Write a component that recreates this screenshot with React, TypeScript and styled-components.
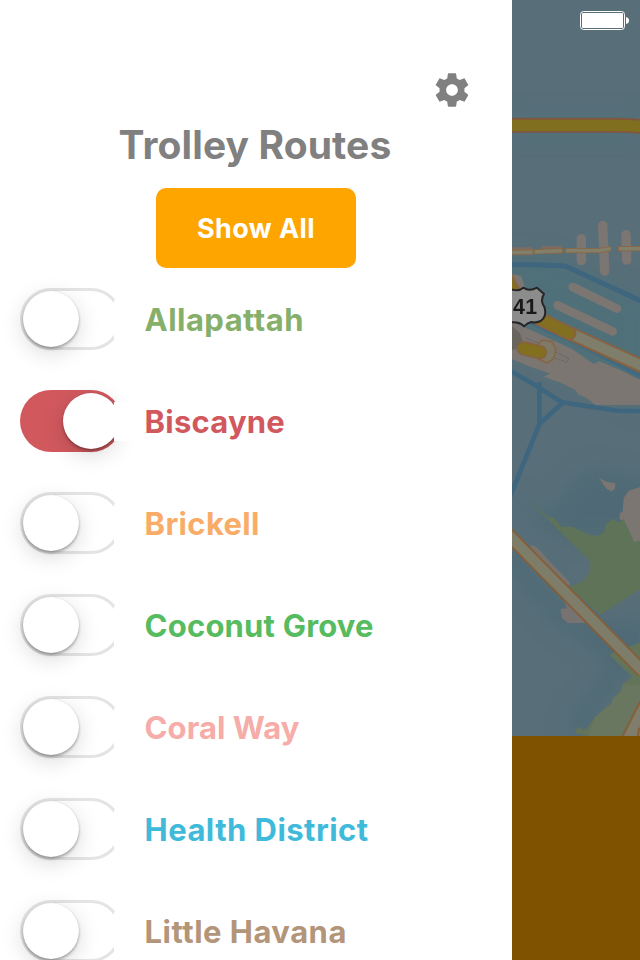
import React from "react";
import styled, { createGlobalStyle } from "styled-components";

const GlobalStyle = createGlobalStyle`
  * { box-sizing: border-box; }
  body { margin: 0; background: #fff; overflow: hidden; }
`;

const Screen = styled.div`
  display: flex;
  width: 640px;
  height: 960px;
  overflow: hidden;
  font-family: Inter, "Liberation Sans", sans-serif;
  font-weight: 700;
  font-feature-settings: "calt" 0, "liga" 0;
`;

const Drawer = styled.aside`
  display: flex;
  flex-direction: column;
  width: 512px;
  height: 960px;
  overflow: hidden;
  background: #fff;
`;

const Toolbar = styled.div`
  display: flex;
  justify-content: flex-end;
  padding: 70px 40px 0 0;
`;

const IconButton = styled.button`
  display: flex;
  padding: 0;
  border: 0;
  background: none;
`;

const Title = styled.h1`
  margin: 11px 2px 0 0;
  height: 48px;
  line-height: 48px;
  font-size: 39px;
  font-weight: 700;
  letter-spacing: 0.1px;
  text-align: center;
  color: #808080;
`;

const ShowAll = styled.button`
  align-self: center;
  flex: none;
  width: 200px;
  height: 80px;
  margin-top: 19px;
  padding: 0;
  border: 0;
  border-radius: 10px;
  background: #ffa500;
  color: #fff;
  font: inherit;
  font-size: 27px;
  letter-spacing: 0.4px;
`;

const RouteList = styled.div`
  display: flex;
  flex-direction: column;
  gap: 40px;
  padding: 20px 0 0 20px;
`;

const Route = styled.div`
  display: flex;
  align-items: center;
  height: 62px;
`;

const Switch = styled.div<{ $on?: boolean; $color: string }>`
  display: flex;
  flex: none;
  justify-content: ${(p) => (p.$on ? "flex-end" : "flex-start")};
  width: 102px;
  height: 62px;
  padding: ${(p) => (p.$on ? "3px" : "0")};
  border: ${(p) => (p.$on ? "0" : "3px solid #e4e4e4")};
  border-radius: 31px;
  background: ${(p) => (p.$on ? p.$color : "#fff")};
`;

const Knob = styled.div`
  width: 56px;
  height: 56px;
  border-radius: 50%;
  background: #fff;
  box-shadow: 0 6px 22px rgba(0, 0, 0, 0.15), 0 2px 3px rgba(0, 0, 0, 0.3),
    0 0 1px rgba(0, 0, 0, 0.15);
`;

const Name = styled.span<{ $color: string; $spacing: number }>`
  position: relative;
  z-index: 1;
  flex: none;
  width: 368px;
  height: 39px;
  margin: 1px 0 0 -8px;
  padding-left: 30.6px;
  line-height: 40px;
  font-size: 31px;
  letter-spacing: ${(p) => p.$spacing}px;
  white-space: nowrap;
  background: #fff;
  color: ${(p) => p.$color};
`;

const Backdrop = styled.main`
  position: relative;
  display: flex;
  flex-direction: column;
  width: 128px;
  height: 960px;
  background: #7f5200;
`;

const MapView = styled.svg`
  display: block;
  flex: none;
  width: 128px;
  height: 736px;
`;

const Battery = styled.svg`
  position: absolute;
  top: 10px;
  right: 10px;
`;

const routes = [
  { name: "Allapattah", color: "#86af6b", spacing: 0.45 },
  { name: "Biscayne", color: "#d1595e", spacing: 0.2, on: true },
  { name: "Brickell", color: "#f9ac68", spacing: 0.33 },
  { name: "Coconut Grove", color: "#57bc5f", spacing: 0.2 },
  { name: "Coral Way", color: "#f6aca8", spacing: 0.06 },
  { name: "Health District", color: "#3fbadb", spacing: 0.45 },
  { name: "Little Havana", color: "#b3957a", spacing: 0.48 },
];

const Gear = () => (
  <svg width="40" height="40" viewBox="0 0 24 24" fill="#808080">
    <path d="M19.43 12.98c.04-.32.07-.64.07-.98s-.03-.66-.07-.98l2.11-1.65c.19-.15.24-.42.12-.64l-2-3.46c-.12-.22-.39-.3-.61-.22l-2.49 1c-.52-.4-1.08-.73-1.69-.98l-.38-2.65C14.46 2.18 14.25 2 14 2h-4c-.25 0-.46.18-.49.42l-.38 2.65c-.61.25-1.17.59-1.69.98l-2.49-1c-.23-.09-.49 0-.61.22l-2 3.46c-.13.22-.07.49.12.64l2.11 1.65c-.04.32-.07.65-.07.98s.03.66.07.98l-2.11 1.65c-.19.15-.24.42-.12.64l2 3.46c.12.22.39.3.61.22l2.49-1c.52.4 1.08.73 1.69.98l.38 2.65c.03.24.24.42.49.42h4c.25 0 .46-.18.49-.42l.38-2.65c.61-.25 1.17-.59 1.69-.98l2.49 1c.23.09.49 0 .61-.22l2-3.46c.12-.22.07-.49-.12-.64l-2.11-1.65zM12 15.5c-1.93 0-3.5-1.57-3.5-3.5s1.57-3.5 3.5-3.5 3.5 1.57 3.5 3.5-1.57 3.5-3.5 3.5z" />
  </svg>
);

const BayMap = () => (
  <MapView viewBox="0 0 384 2208">
    <defs>
      <filter id="shade" x="-50%" y="-50%" width="200%" height="200%">
        <feGaussianBlur stdDeviation="28" />
      </filter>
    </defs>
    <rect width="384" height="2208" fill="#586f79" />
    <g filter="url(#shade)" fill="#506f79">
      <path d="M-20 760L120 770L400 900V1240L250 1160L-20 1010Z" />
      <path d="M-20 340H400V410H-20Z" opacity=".6" />
      <path d="M230 1400L400 1430V1620H120L-20 1480V1620L200 1860H400V1960L260 2120L230 2208L150 2190L290 1990L120 1870L-20 1700V1470L100 1540Z" fill="#4f6b76" />
    </g>

    {/* northern causeway */}
    <path d="M-10 376H310Q345 376 394 380" fill="none" stroke="#80563f" strokeWidth="45" />
    <path d="M-10 376H310Q345 376 394 380" fill="none" stroke="#816f20" strokeWidth="34" />

    {/* venetian islands, US 41 and the port */}
    <g transform="translate(0 600)">
      <g fill="none" stroke="#7b7672" strokeLinecap="round">
        <path d="M208 116V182M342 104L344 180" strokeWidth="28" />
        <path d="M272 76L278 213" strokeWidth="28" />
        <path d="M182 261L315 326M137 316L302 394" strokeWidth="26" />
      </g>
      <path d="M-10 154H60M90 150H150" stroke="#7d6c64" strokeWidth="24" />
      <path d="M-10 158L155 152M158 152H260L298 146M318 146H394" fill="none" stroke="#86694b" strokeWidth="16" />
      <path d="M-10 158L62 156M68 156L150 152M162 152H260L296 146M321 146H394" fill="none" stroke="#827f6b" strokeWidth="10" />

      <path d="M0 222L28 228L42 270L75 340H0Z" fill="#7b7672" />
      <path d="M0 365L90 405L180 447L245 492L262 484L330 512L384 540V615H250L190 565L120 523L55 500L0 478Z" fill="#7b7672" />
      <path d="M0 378L24 400L35 432L10 448L0 450Z" fill="#68655f" />

      <path d="M-10 194H70L160 198L200 217L394 306" fill="none" stroke="#3e667f" strokeWidth="15" />
      <path d="M25 350L105 390L205 434L394 532" fill="none" stroke="#406a80" strokeWidth="12" />
      <path d="M-14 225L14 272L70 350" fill="none" stroke="#8a643b" strokeWidth="25" />
      <path d="M-14 228L12 272L70 350" fill="none" stroke="#836e1f" strokeWidth="14" />
      <path d="M170 398L394 500" stroke="#866243" strokeWidth="43" />
      <path d="M170 398L394 500" stroke="#7e7e6b" strokeWidth="31" />
      <path d="M65 348L172 400" stroke="#866243" strokeWidth="43" strokeLinecap="round" />
      <path d="M65 348L172 400" stroke="#826f20" strokeWidth="32" strokeLinecap="round" />

      <path d="M42 414L80 430M130 456L170 475L164 487L122 472" fill="none" stroke="#5c5a58" strokeWidth="2" strokeDasharray="8 3" />
      <path d="M91 420L120 425L132 449L124 477L105 489L80 478L85 448L77 433Z" fill="#7d7b68" stroke="#876547" strokeWidth="5" strokeLinejoin="round" />
      <path d="M35 445L84 457" stroke="#866243" strokeWidth="43" strokeLinecap="round" />
      <path d="M35 445L84 457" stroke="#826f20" strokeWidth="33" strokeLinecap="round" />

      <path d="M-40 270L2 269Q20 275 34 263Q52 276 75 263L96 282Q83 301 98 323Q105 350 86 363Q70 370 58 366Q47 368 36 379Q25 366 0 367L-40 360Z" fill="#8c8c8c" stroke="#252525" strokeWidth="6" strokeLinejoin="round" />
      <text x="3" y="342" fill="#181818" fontFamily="Liberation Sans, sans-serif" fontWeight="700" fontSize="64" textLength="72">41</text>
    </g>

    {/* bay channels and Virginia Key */}
    <g transform="translate(0 1140)">
      <path d="M95 -10L150 10L190 30L198 43L245 63L300 68L384 68V0L300 -38H150Z" fill="#7b7672" />
      <path d="M-10 -30L60 10L150 67L320 93H394M82 6V132L155 66M84 128L-10 360" fill="none" stroke="#3e667f" strokeWidth="14" />
      <path d="M261 294L285 306L310 310L309 326L299 334L284 327Z" fill="#7b7672" />
      <path d="M384 321L350 332L335 355L332 395L323 400V418L338 425L364 486H384Z" fill="#7b7672" />
      <path d="M50 363L108 411L125 413L148 440L181 440L225 461L250 468L275 459L283 429L303 416L323 427L335 417L367 486L384 482V628L340 656L265 704L170 620L210 605L233 580V542L115 426Z" fill="#5f7359" />
      <path d="M55 495L70 498L175 608L165 635L62 525Z" fill="#777371" />
    </g>

    {/* Rickenbacker causeway */}
    <g transform="translate(0 1680)">
      <path d="M155 120L165 145L145 147L150 174L168 190L220 189L240 155Z" fill="#777371" />
      <path d="M384 248L350 260L292 284L360 350L333 372L325 395L302 417L298 430L250 470L222 510L195 502L191 520L228 528H384Z" fill="#62745a" />
      <path d="M384 375L335 372L325 395L302 417L298 430L250 470L228 528H384Z" fill="#697660" />
      <path d="M330 528L384 420V528Z" fill="#807d6d" />
      <path d="M330 532L388 418M378 532L380 508L390 500" fill="none" stroke="#865e38" strokeWidth="6" />
      <path d="M-80 -146L394 335" stroke="#865e38" strokeWidth="42" />
      <path d="M-80 -146L394 335" stroke="#7e7d6a" strokeWidth="31" />
    </g>
  </MapView>
);

export default function App() {
  return (
    <Screen>
      <GlobalStyle />
      <Drawer>
        <Toolbar>
          <IconButton aria-label="Settings">
            <Gear />
          </IconButton>
        </Toolbar>
        <Title>Trolley Routes</Title>
        <ShowAll>Show All</ShowAll>
        <RouteList>
          {routes.map((r) => (
            <Route key={r.name}>
              <Switch $on={r.on} $color={r.color} role="switch" aria-checked={!!r.on}>
                <Knob />
              </Switch>
              <Name $color={r.color} $spacing={r.spacing}>
                {r.name}
              </Name>
            </Route>
          ))}
        </RouteList>
      </Drawer>
      <Backdrop>
        <BayMap />
        <Battery width="50" height="20" viewBox="0 0 50 20">
          <rect x="0.5" y="1.5" width="44" height="18" rx="3" fill="none" stroke="#fff" />
          <rect x="2" y="3" width="41" height="15" rx="1" fill="#fff" />
          <path d="M46 7Q49 7.5 49 10.5T46 14Z" fill="#fff" />
        </Battery>
      </Backdrop>
    </Screen>
  );
}
